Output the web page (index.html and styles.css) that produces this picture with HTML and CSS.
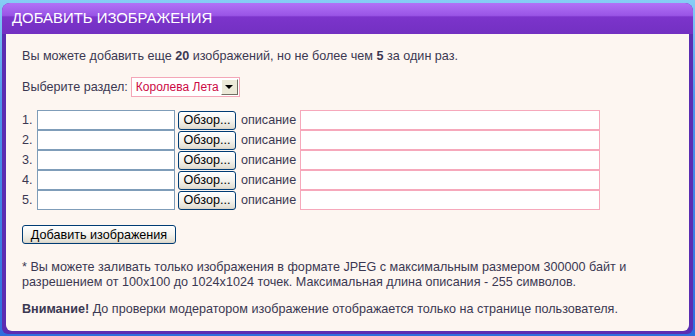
FILE: index.html
```html
<!DOCTYPE html>
<html lang="ru">
<head>
    <meta charset="UTF-8">
    <title>Добавить изображения</title>
    <link rel="stylesheet" href="styles.css">
</head>
<body>
    <div class="window">
        <div class="titlebar">ДОБАВИТЬ ИЗОБРАЖЕНИЯ</div>
        <div class="content">
            <p class="intro">Вы можете добавить еще <b>20</b> изображений, но не более чем <b>5</b> за один раз.</p>

            <div class="section">
                <span>Выберите раздел:</span>
                <div class="select">
                    <span class="select-text">Королева Лета</span>
                    <span class="select-arrow"></span>
                </div>
            </div>

            <!-- File rows -->
            <div class="files">
                <div class="file-row">
                    <span class="num">1.</span>
                    <input class="file-input" type="text">
                    <button class="browse">Обзор...</button>
                    <span class="label">описание</span>
                    <input class="desc" type="text">
                </div>
                <div class="file-row">
                    <span class="num">2.</span>
                    <input class="file-input" type="text">
                    <button class="browse">Обзор...</button>
                    <span class="label">описание</span>
                    <input class="desc" type="text">
                </div>
                <div class="file-row">
                    <span class="num">3.</span>
                    <input class="file-input" type="text">
                    <button class="browse">Обзор...</button>
                    <span class="label">описание</span>
                    <input class="desc" type="text">
                </div>
                <div class="file-row">
                    <span class="num">4.</span>
                    <input class="file-input" type="text">
                    <button class="browse">Обзор...</button>
                    <span class="label">описание</span>
                    <input class="desc" type="text">
                </div>
                <div class="file-row">
                    <span class="num">5.</span>
                    <input class="file-input" type="text">
                    <button class="browse">Обзор...</button>
                    <span class="label">описание</span>
                    <input class="desc" type="text">
                </div>
            </div>

            <button class="submit">Добавить изображения</button>

            <p class="note">* Вы можете заливать только изображения в формате JPEG с максимальным размером 300000 байт и разрешением от 100x100 до 1024x1024 точек. Максимальная длина описания - 255 символов.</p>
            <p class="note warn"><b>Внимание!</b> До проверки модератором изображение отображается только на странице пользователя.</p>
        </div>
    </div>
</body>
</html>
```

FILE: styles.css
```css
/* General */
body {
    margin: 0;
    height: 336px;
    overflow: hidden;
    font-family: "Liberation Sans", Arial, sans-serif;
    font-size: 12.6px;
    color: #3b3852;
    background: linear-gradient(#86cdf4 0%, #4f95ea 30%, #2f6ddc 100%);
}

/* Window frame */
.window {
    margin: 3px 2px 0 2px;
    height: 331px;
    display: flex;
    flex-direction: column;
    border-radius: 8px 8px 6px 6px;
    background-color: #5b2db2;
    overflow: hidden;
}

.titlebar {
    height: 31px;
    padding-left: 10px;
    line-height: 30px;
    font-size: 14.9px;
    color: #ffffff;
    background: linear-gradient(#b172f6 0%, #9a55e6 40%, #7c34cb 45%, #7330c2 100%);
}

.content {
    flex: 1;
    margin: 0 4px 3px 4px;
    padding: 15px 16px 0 16px;
    background-color: #fdf6f1;
    border-radius: 0 0 6px 6px;
}

p {
    margin: 0;
    line-height: 15px;
}

b {
    font-weight: bold;
}

/* Section select */
.section {
    display: flex;
    align-items: center;
    gap: 3px;
    margin-top: 13px;
    height: 20px;
}

.select {
    display: flex;
    align-items: center;
    gap: 2px;
    height: 18px;
    border: 1px solid #f4a6b8;
    background-color: #ffffff;
}

.select-text {
    padding-left: 4px;
    white-space: nowrap;
    font-size: 12px;
    color: #cc0a45;
}

.select-arrow {
    position: relative;
    flex: none;
    width: 15px;
    height: 14px;
    margin-right: 1px;
    background-color: #ece9d8;
    border: 1px solid;
    border-color: #ffffff #716f64 #716f64 #ffffff;
}

.select-arrow::after {
    content: "";
    position: absolute;
    left: 3px;
    top: 5px;
    border-left: 4px solid transparent;
    border-right: 4px solid transparent;
    border-top: 4px solid #000000;
}

/* File rows */
.files {
    margin-top: 13px;
}

.file-row {
    display: flex;
    align-items: center;
    height: 20px;
}

.num {
    width: 15px;
}

input {
    box-sizing: border-box;
    height: 20px;
    margin: 0;
    background-color: #ffffff;
    font-family: inherit;
}

.file-input {
    width: 138px;
    border: 1px solid #7f9db9;
}

.desc {
    width: 300px;
    border: 1px solid #f6a8bb;
}

.label {
    margin: 0 4px 0 5px;
}

/* XP style buttons */
.browse,
.submit {
    box-sizing: border-box;
    height: 19px;
    padding: 0;
    font-family: inherit;
    font-size: 12.6px;
    color: #000000;
    border: 1px solid #003c74;
    border-radius: 3px;
    background: linear-gradient(#ffffff 0%, #f4f3ee 50%, #e3e0d5 90%, #d6d0c5 100%);
}

.browse {
    width: 58px;
    margin-left: 3px;
}

.submit {
    display: block;
    width: 154px;
    margin-top: 15px;
}

/* Notes */
.note {
    margin-top: 16px;
}

.warn {
    margin-top: 12px;
}
```
